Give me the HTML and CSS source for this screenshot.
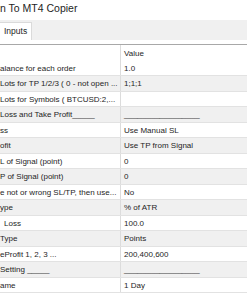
FILE: index.html
```html
<!DOCTYPE html>
<html lang="en">
<head>
    <meta charset="UTF-8">
    <meta name="viewport" content="width=device-width, initial-scale=1.0">
    <title>Signal To MT4 Copier</title>
    <link rel="stylesheet" href="styles.css">
</head>
<body>
    <div class="title">n To MT4 Copier</div>
    <div class="tabs">
        <div class="tab">Inputs</div>
    </div>
    <div class="panel">
        <div class="grid">
            <div class="row head">
                <div class="name"></div>
                <div class="value">Value</div>
            </div>
            <div class="row">
                <div class="name">alance for each order</div>
                <div class="value">1.0</div>
            </div>
            <div class="row">
                <div class="name">Lots for TP 1/2/3 ( 0 - not open ...</div>
                <div class="value">1;1;1</div>
            </div>
            <div class="row">
                <div class="name">Lots for Symbols ( BTCUSD:2,...</div>
                <div class="value"></div>
            </div>
            <div class="row">
                <div class="name">Loss and Take Profit_____</div>
                <div class="value">_________________</div>
            </div>
            <div class="row">
                <div class="name">ss</div>
                <div class="value">Use Manual SL</div>
            </div>
            <div class="row">
                <div class="name">ofit</div>
                <div class="value">Use TP from Signal</div>
            </div>
            <div class="row">
                <div class="name">L of Signal (point)</div>
                <div class="value">0</div>
            </div>
            <div class="row">
                <div class="name">P of Signal (point)</div>
                <div class="value">0</div>
            </div>
            <div class="row">
                <div class="name">e not or wrong SL/TP, then use...</div>
                <div class="value">No</div>
            </div>
            <div class="row">
                <div class="name">ype</div>
                <div class="value">% of ATR</div>
            </div>
            <div class="row">
                <div class="name indent">Loss</div>
                <div class="value">100.0</div>
            </div>
            <div class="row">
                <div class="name">Type</div>
                <div class="value">Points</div>
            </div>
            <div class="row">
                <div class="name">eProfit 1, 2, 3 ...</div>
                <div class="value">200,400,600</div>
            </div>
            <div class="row">
                <div class="name">Setting _____</div>
                <div class="value">_________________</div>
            </div>
            <div class="row">
                <div class="name">ame</div>
                <div class="value">1 Day</div>
            </div>
        </div>
    </div>
</body>
</html>
```

FILE: styles.css
```css
body {
    margin: 0;
    width: 247px;
    height: 296px;
    overflow: hidden;
    background: #fff;
    color: #1e1e1e;
    font-family: "Liberation Sans", Arial, sans-serif;
    font-size: 8px;
}

.title {
    height: 20px;
    line-height: 17px;
    font-size: 10.5px;
    white-space: nowrap;
}

.tabs {
    height: 20px;
    background: #f0f0f0;
    display: flex;
    align-items: flex-end;
}

.tab {
    height: 17px;
    width: 27px;
    padding-left: 4px;
    line-height: 17px;
    background: #fff;
    border: 1px solid #dadada;
    border-left: none;
    border-bottom: none;
    font-size: 8.5px;
}

.panel {
    padding-top: 4px;
}

.grid {
    border-top: 1px solid #a8a8a8;
}

.row {
    display: flex;
    height: 15.5px;
    line-height: 15px;
    border-bottom: 1px solid #e2e2e2;
    box-sizing: border-box;
    white-space: nowrap;
}

.row:nth-child(odd) {
    background: #f0f0f0;
}

.row.head {
    background: #fff;
    border-bottom: none;
    line-height: 17px;
}

.name {
    width: 121px;
    box-sizing: border-box;
    overflow: hidden;
    border-right: 1px solid #dcdcdc;
}

.name.indent {
    padding-left: 4px;
}

.value {
    padding-left: 3px;
    flex: 1;
    overflow: hidden;
}
```
